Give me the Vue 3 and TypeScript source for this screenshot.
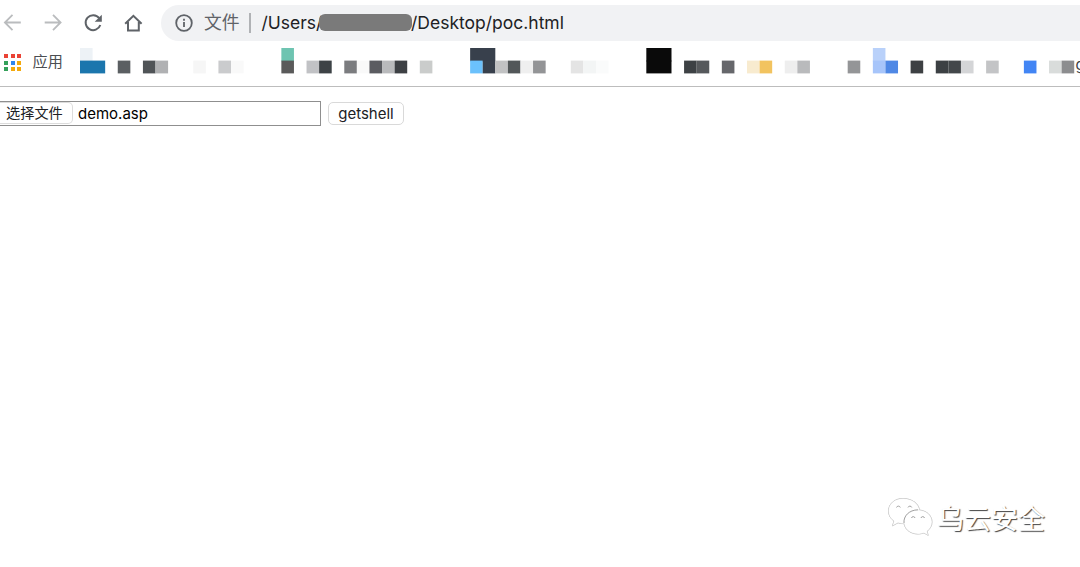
<script setup lang="ts">
interface Cell {
  col: number
  span?: number
  top?: boolean
  color: string
}

const PITCH = 12.585

const cells: Cell[] = [
  { col: 0, top: true, color: '#edf2f6' },
  { col: 0, span: 2, color: '#1b76ad' },
  { col: 3, color: '#5b5f62' },
  { col: 5, color: '#505457' },
  { col: 6, color: '#b0b1b3' },
  { col: 9, color: '#f6f6f6' },
  { col: 11, color: '#cacbcd' },
  { col: 12, color: '#f9f9f9' },
  { col: 16, top: true, color: '#6ec4b1' },
  { col: 16, color: '#5a5a5a' },
  { col: 18, color: '#c1c2c5' },
  { col: 19, color: '#3d4246' },
  { col: 21, color: '#7b7c7f' },
  { col: 22, color: '#f9f9f9' },
  { col: 23, color: '#5b5c61' },
  { col: 24, color: '#b9babc' },
  { col: 25, color: '#3d4044' },
  { col: 27, color: '#cacccb' },
  { col: 31, span: 2, top: true, color: '#38404c' },
  { col: 31, color: '#6bc1fc' },
  { col: 32, color: '#38404c' },
  { col: 33, color: '#c1c2c3' },
  { col: 34, color: '#525759' },
  { col: 35, color: '#efefef' },
  { col: 36, color: '#939496' },
  { col: 39, color: '#e4e4e4' },
  { col: 40, color: '#f3f5f5' },
  { col: 41, color: '#fafbfb' },
  { col: 45, span: 2, top: true, color: '#0a0a0a' },
  { col: 45, span: 2, color: '#0a0a0a' },
  { col: 48, color: '#3d4144' },
  { col: 49, color: '#56595c' },
  { col: 51, color: '#66676b' },
  { col: 53, color: '#f8ebcf' },
  { col: 54, color: '#f2c35f' },
  { col: 56, color: '#eeeeee' },
  { col: 57, color: '#b9babc' },
  { col: 61, color: '#949597' },
  { col: 63, top: true, color: '#b9d1fa' },
  { col: 63, color: '#a7c5fa' },
  { col: 64, color: '#4f88e5' },
  { col: 66, color: '#3d4043' },
  { col: 68, color: '#3c4043' },
  { col: 69, color: '#43474a' },
  { col: 70, color: '#d4d5d7' },
  { col: 72, color: '#c3c4c6' },
  { col: 75, color: '#4285f4' },
  { col: 77, color: '#d9dcdb' },
  { col: 78, color: '#8c8d8f' },
]

const appDots: string[] = [
  '#ea4335', '#ea4335', '#ea4335',
  '#34a05a', '#2f86f0', '#f4a90c',
  '#34a05a', '#f4a90c', '#f4a90c',
]
</script>

<template>
  <div class="window">
    <header class="toolbar">
      <nav class="nav">
        <svg class="icon faded" viewBox="0 0 20 20"><path d="M17.8 9.500H2.300M9.500 1.900 1.900 9.500l7.600 7.600" /></svg>
        <svg class="icon faded" viewBox="0 0 20 20"><path d="M1.700 9.500h15.500M10 1.900l7.600 7.600-7.600 7.600" /></svg>
        <svg class="icon" viewBox="0 0 20 20">
          <path d="M16.200 5.200A7.500 7.500 0 1 0 17.300 12" />
          <path class="solid" d="M18.800 1.700v7.100h-7.100z" />
        </svg>
        <svg class="icon" viewBox="0 0 20 20"><path d="M2.200 10.700 10.400 2.800l8.200 7.900M5 9v8.400h10.800V9" /></svg>
      </nav>
      <div class="address">
        <svg class="info" viewBox="0 0 18 18">
          <circle cx="9" cy="9" r="7.800" />
          <path d="M9 8v5M9 4.800v1.900" />
        </svg>
        <span class="scheme">文件</span>
        <span class="divider"></span>
        <span class="url users">/Users/</span>
        <span class="redacted"></span>
        <span class="url path">/Desktop/poc.html</span>
      </div>
    </header>

    <div class="bookmarks">
      <div class="apps">
        <i v-for="(color, i) in appDots" :key="i" :style="{ background: color }"></i>
      </div>
      <span class="apps-label">应用</span>
      <svg class="mosaic" width="995" height="26" viewBox="0 0 995 26">
        <rect
          v-for="(cell, i) in cells"
          :key="i"
          :x="cell.col * PITCH"
          :y="cell.top ? 0 : 12.6"
          :width="(cell.span ?? 1) * PITCH"
          :height="cell.top ? 13.4 : 12.8"
          :fill="cell.color"
        />
      </svg>
      <span class="cut">g</span>
    </div>

    <main class="page">
      <div class="file">
        <span class="choose">选择文件</span>
        <span class="filename">demo.asp</span>
      </div>
      <button class="submit" type="button">getshell</button>
    </main>

    <div class="watermark">
      <svg class="wechat" width="46" height="40" viewBox="0 0 46 40">
        <path d="M16 1.500C7.500 1.500 1.500 7 1.500 14c0 4.200 2 7.600 5.500 10l-1.500 4.800 5.500-3c2 .7 4.500 1 7 .8 9-.5 14.500-6 14.500-12.600C32.500 7 25 1.500 16 1.500z" />
        <path class="front" d="M31 13c-8 0-14 5.300-14 12s6 12 14 12c2.200 0 4-.4 5.800-1.100l4.400 2.400-1.200-4c3-2.300 5-5.500 5-9.300 0-6.700-6-12-14-12z" />
        <path class="eyes" d="M9.500 10.500a2 2 0 0 1 3.800 0M21 10.500a2 2 0 0 1 3.800 0M24.500 21a1.800 1.800 0 0 1 3.500 0M34 21a1.800 1.800 0 0 1 3.500 0" />
        <path class="rim" d="M17 26c-.6-7 5-13 14-13.200" />
      </svg>
      <span class="brand">乌云安全</span>
    </div>
  </div>
</template>

<style>
html,
body {
  margin: 0;
  background: #fff;
  overflow: hidden;
}
</style>

<style scoped>
.window {
  position: relative;
  width: 1080px;
  height: 567px;
  overflow: hidden;
  background: #fff;
  color: #202124;
  font-family: Inter, "Noto Sans CJK SC", sans-serif;
}
.toolbar {
  display: flex;
  height: 41px;
  box-sizing: border-box;
  padding-top: 5px;
}
.nav {
  display: flex;
  align-items: center;
  gap: 20px;
  width: 158px;
  height: 35px;
  padding-left: 3px;
  flex: none;
}
.icon {
  width: 20px;
  height: 20px;
  flex: none;
  fill: none;
  stroke: #5f6368;
  stroke-width: 2;
}
.icon.faded {
  stroke: #babcbe;
  stroke-width: 1.8;
}
.icon .solid {
  fill: #5f6368;
  stroke: none;
}
.address {
  display: flex;
  align-items: center;
  flex: 1;
  height: 35.5px;
  padding-left: 14px;
  background: #f1f2f4;
  border-radius: 18px 0 0 18px;
  white-space: nowrap;
}
.info {
  width: 18px;
  height: 18px;
  fill: none;
  stroke: #5f6368;
  stroke-width: 1.8;
}
.scheme {
  width: 36px;
  margin-left: 11px;
  font-size: 17.8px;
  line-height: 30px;
  color: #5f6368;
}
.divider {
  width: 1.5px;
  height: 20px;
  margin: 0 11px 0 9px;
  background: #b0b2b5;
}
.url {
  font-size: 17.5px;
  line-height: 30px;
}
.users {
  width: 57px;
}
.redacted {
  position: relative;
  z-index: 1;
  width: 93px;
  height: 17px;
  margin-right: -0.5px;
  border-radius: 6px;
  background: #7a7a7a;
}
.bookmarks {
  display: flex;
  align-items: flex-start;
  height: 45px;
  border-bottom: 1px solid #bdbdbd;
}
.apps {
  display: grid;
  flex: none;
  grid-template-columns: repeat(3, 4px);
  grid-auto-rows: 4px;
  gap: 2.5px;
  margin: 13px 0 0 4px;
}
.apps-label {
  flex: none;
  width: 31px;
  margin: 9px 0 0 11.5px;
  font-size: 15.2px;
  line-height: 24px;
  white-space: nowrap;
  color: #4b4e52;
}
.mosaic {
  flex: none;
  margin: 6.6px 0 0 16.4px;
}
.cut {
  margin: 14px 0 0 0.6px;
  font-size: 15px;
  line-height: 20px;
  color: #3c4043;
}
.page {
  display: flex;
  align-items: flex-start;
  padding-top: 14px;
}
.file {
  display: flex;
  align-items: flex-start;
  box-sizing: border-box;
  width: 321px;
  height: 25px;
  border: 1px solid #8f8f8f;
  border-left: 0;
}
.choose {
  box-sizing: border-box;
  width: 73px;
  height: 22px;
  padding-left: 6px;
  border: 1px solid #dcdcdc;
  border-left: 0;
  border-radius: 0 5px 5px 0;
  font-size: 14.2px;
  line-height: 20px;
  white-space: nowrap;
}
.filename {
  margin: 2px 0 0 5px;
  font-size: 15px;
  line-height: 20px;
  color: #000;
}
.submit {
  box-sizing: border-box;
  width: 76px;
  height: 23px;
  margin: 1px 0 0 7px;
  padding: 0;
  border: 1px solid #d9d9d9;
  border-radius: 5px;
  background: #fff;
  font-family: inherit;
  font-size: 15px;
  line-height: 20px;
  color: #202124;
}
.watermark {
  position: absolute;
  left: 887px;
  top: 494px;
  display: flex;
  align-items: center;
}
.wechat {
  fill: #fff;
  stroke: #e6e6e6;
  stroke-width: 0.5;
  filter: drop-shadow(0.7px 0.9px 0.5px #777);
}
.wechat .eyes {
  fill: none;
  stroke: #999;
  stroke-width: 0.9;
}
.wechat .rim {
  fill: none;
  stroke: #999;
  stroke-width: 0.9;
}
.brand {
  margin: 6px 0 0 4px;
  font-size: 27px;
  line-height: 40px;
  color: #fff;
  text-shadow: 1px 1px 1px #444;
}
</style>
